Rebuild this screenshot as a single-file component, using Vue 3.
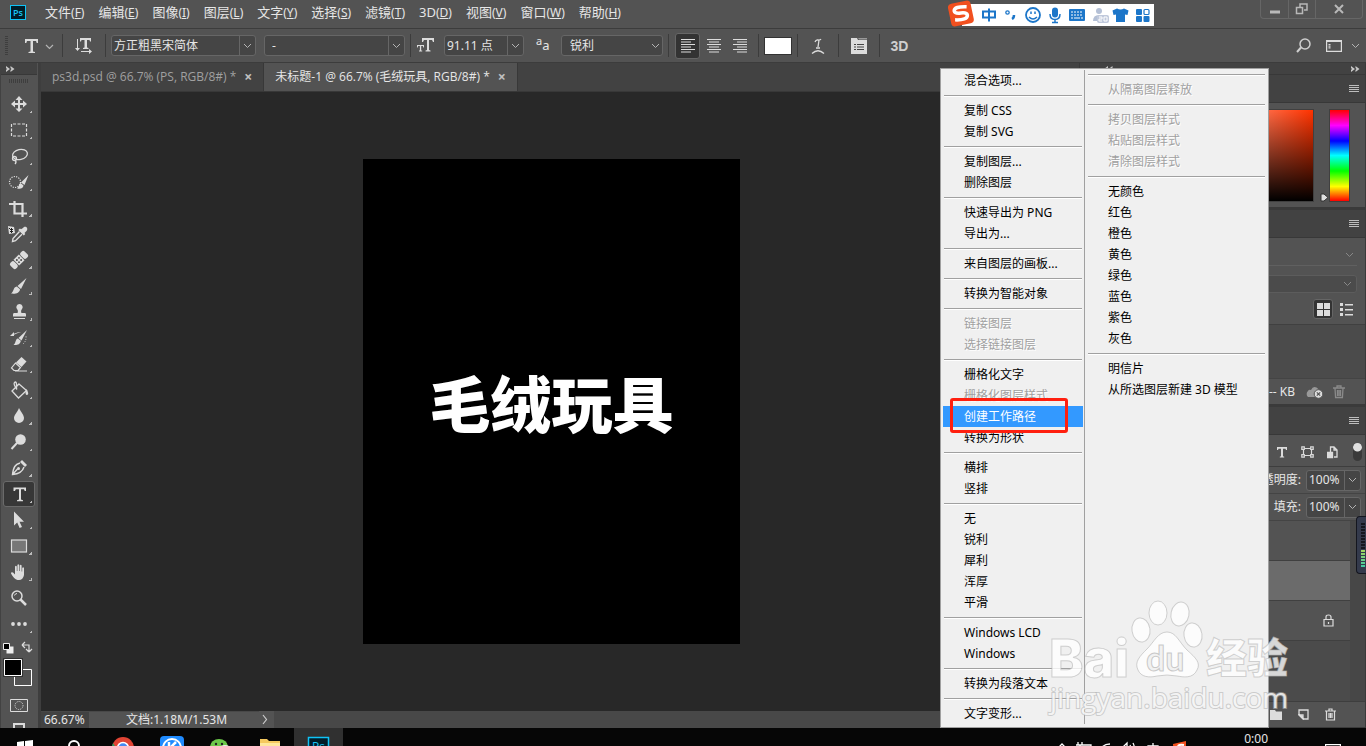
<script setup>
import { ref } from 'vue'

const menus = [
  ['文件', 'F'], ['编辑', 'E'], ['图像', 'I'], ['图层', 'L'], ['文字', 'Y'], ['选择', 'S'],
  ['滤镜', 'T'], ['3D', 'D'], ['视图', 'V'], ['窗口', 'W'], ['帮助', 'H'],
]

const tools = [
  { name: '移动', icon: '<path d="M16 5l3.500 4H17v3h3V9.500l4 3.500-4 3.500V14h-3v3.500h2.500L16 21l-3.500-3.500H15V14h-3v2.500L8 13l4-3.500V12h3V9h-2.500z"/>' },
  { name: '矩形选框', icon: '<path d="M8.500 7v12h15V7z" fill="none" stroke="#dcdcdc" stroke-width="1.200" stroke-dasharray="3 1.500"/>' },
  { name: '套索', icon: '<g fill="none" stroke="#dcdcdc" stroke-width="1.300"><ellipse cx="17" cy="11.500" rx="7.500" ry="5" transform="rotate(-12 17 11.500)"/><circle cx="11.500" cy="15.500" r="2"/><path d="M12 17q2 2 0 4"/></g>' },
  { name: '快速选择', icon: '<circle cx="12" cy="13" r="5.500" fill="none" stroke="#dcdcdc" stroke-width="1.200" stroke-dasharray="1.200 1.200"/><path d="M25.500 6l-4 10-3.500-2.500zM17.500 14l3 2.500c-.5 3.500-3.500 3.500-6.500 3 2-1 1.500-4.500 3.500-5.500z"/>' },
  { name: '裁剪', icon: '<path d="M6 9h13.500v8M11.500 6v12.500H24M19.500 9v13" fill="none" stroke="#dcdcdc" stroke-width="2.200"/>' },
  { name: '吸管', icon: '<path d="M5 5l6 1 1 6-6 1z"/><path d="M6 7h1v1h1V7h1v1h1v1H9v1h1v1H9v1H8v-1H7v-1h1V9H7V8H6z" fill="#222"/><path d="M20 7c2-3 6 0 3.500 3l-2 2 .8 1-1.500 1.500-5.500-5.500L17 7.500l1 .8z"/><path d="M16.500 10.500l-6.500 7-.5 3 3-.8 6.500-6.500" fill="none" stroke="#dcdcdc" stroke-width="1.400"/>' },
  { name: '污点修复', icon: '<g transform="rotate(-45 16 13)"><rect x="6" y="9" width="5.500" height="8" rx="2"/><rect x="12.200" y="9" width="7.600" height="8"/><rect x="20.500" y="9" width="5.500" height="8" rx="2"/><g fill="#444"><circle cx="14.500" cy="11.500" r=".9"/><circle cx="17.500" cy="11.500" r=".9"/><circle cx="14.500" cy="14.500" r=".9"/><circle cx="17.500" cy="14.500" r=".9"/></g></g>' },
  { name: '画笔', icon: '<path d="M23.500 5l-5.500 11-3.500-3zM13.800 13.500l3.200 2.700c-.3 4-4.500 4.800-9 4.300 3-1.500 2-6.500 5.800-7z"/>' },
  { name: '仿制图章', icon: '<path d="M16.500 5a3.200 3.200 0 0 1 2.200 5.500c-.8 1-.7 2.500-.2 3.500H22q1 0 1 1.500V17.500H10v-2q0-1.500 1-1.500h3.500c.5-1 .6-2.500-.2-3.500A3.200 3.200 0 0 1 16.500 5zM11 19h11v1H11z"/>' },
  { name: '历史记录画笔', icon: '<path d="M24 5l-5.500 10.500-3-2.500zM15 13.500l2.800 2.300c-.5 4-3.800 4.500-7.300 4.200 2.500-1.500 1.500-6 4.500-6.500z"/><path d="M7 11l4-4v1.800q4-2 7-1.800-4 1-7 2.800V11z"/><path d="M20 19q3.500-3 3-8" fill="none" stroke="#dcdcdc" stroke-dasharray="1 1.500"/>' },
  { name: '橡皮擦', icon: '<path d="M18.500 6l5 4.500-5 5.500-5.500-4.500z"/><path d="M12.500 12l5 4.500-2.500 3h-4l-2.500-2.500zM12 20h12" fill="none" stroke="#dcdcdc" stroke-width="1.200"/>' },
  { name: '油漆桶', icon: '<path d="M16 7l7.500 6.500-8 7.500-6.500-7zM13.500 12V7q-.5-3-2-1.500T14 12.500" fill="none" stroke="#dcdcdc" stroke-width="1.300"/><path d="M23 12c3 3 2.500 6 1 6s-2-2-1-6z"/>' },
  { name: '模糊', icon: '<path d="M16 5c2.500 5 5 7 5 10a5 5 0 0 1-10 0c0-3 3-5 5-10z"/>' },
  { name: '减淡', icon: '<circle cx="17.500" cy="10.500" r="5.300"/><path d="M14 14l-5.500 6" stroke="#dcdcdc" stroke-width="2"/>' },
  { name: '钢笔', icon: '<path d="M19 5l5 5-2 2-5-5z"/><path d="M17 8c-5 1.500-6.500 4-7.500 11.500 6-.5 10-2.500 11.500-7.500M9.500 19.500l5-5.500" fill="none" stroke="#dcdcdc" stroke-width="1.400"/><circle cx="15.500" cy="13.500" r="1.500"/>' },
  { name: '横排文字', icon: '<path d="M10.500 6.500h12.500V10h-1.300l-.7-1.700h-3V18.500l2 .7v1h-6v-1l2-.7V8.300h-3.200L12 10h-1.500z"/>' },
  { name: '路径选择', icon: '<path d="M11 4.500v14l3.200-3 2.400 5.500 2.400-1-2.500-5.300H21z"/>' },
  { name: '矩形', icon: '<rect x="8.500" y="7" width="15" height="12" fill="#777" stroke="#dcdcdc" stroke-width="1.200"/>' },
  { name: '抓手', icon: '<path d="M12 13V7.500q1-1.500 1.800 0V12h.6V6q1-1.500 1.800 0v6h.6V6.500q1-1.500 1.800 0V12.500h.6V9q1-1.300 1.800 0v7q-1 5-5 5h-1.500q-3.500-1-6.500-6.500 0-2 2-1l2 2z"/>' },
  { name: '缩放', icon: '<circle cx="14" cy="11" r="5" fill="none" stroke="#dcdcdc" stroke-width="1.500"/><path d="M17.500 14.500l5.500 5.500" stroke="#dcdcdc" stroke-width="2.500"/><path d="M11.500 10.500q.5-2 2.500-2" stroke="#dcdcdc" fill="none"/>', flat: true },
  { name: '更多', icon: '<circle cx="10" cy="13" r="1.900"/><circle cx="16" cy="13" r="1.900"/><circle cx="22" cy="13" r="1.900"/>' },
]

const activeTool = ref('横排文字')
const font = ref('方正粗黑宋简体')
const fontStyle = ref('-')
const fontSize = ref('91.11 点')
const opacity = ref('100%')
const fill = ref('100%')

// null = linia podziału, ! = pozycja nieaktywna
const leftMenu = [
  '混合选项...', null, '复制 CSS', '复制 SVG', null, '复制图层...', '删除图层', null,
  '快速导出为 PNG', '导出为...', null, '来自图层的画板...', null, '转换为智能对象', null,
  '!链接图层', '!选择链接图层', null, '栅格化文字', '!栅格化图层样式', '创建工作路径', '转换为形状', null,
  '横排', '竖排', null, '无', '锐利', '犀利', '浑厚', '平滑', null,
  'Windows LCD', 'Windows', null, '转换为段落文本', null, '文字变形...',
]
const rightMenu = [
  null, '!从隔离图层释放', null, '!拷贝图层样式', '!粘贴图层样式', '!清除图层样式', null,
  '无颜色', '红色', '橙色', '黄色', '绿色', '蓝色', '紫色', '灰色', null,
  '明信片', '从所选图层新建 3D 模型',
]
const columns = [leftMenu, rightMenu]
const marked = '创建工作路径'
</script>

<template>
  <div class="app">
    <header class="menubar">
      <svg class="logo" width="16" height="15" viewBox="0 0 16 15">
        <rect x=".5" y=".5" width="15" height="14" fill="#001d29" stroke="#0fc3f7" />
        <text x="3" y="11" font-size="9" font-family="Open Sans" font-weight="600" fill="#18c5f5">Ps</text>
      </svg>
      <nav class="menus">
        <button v-for="m in menus" :key="m[1]">{{ m[0] }}<span class="key">(<u>{{ m[1] }}</u>)</span></button>
      </nav>
      <div class="window-buttons">
        <button aria-label="最小化"><svg width="12" height="12"><path d="M1 7.500h10v3H1z" fill="#b8b8b8" /></svg></button>
        <button aria-label="还原"><svg width="14" height="12" fill="none" stroke="#b8b8b8" stroke-width="1.500"><path d="M5 5V1h7v6H9M1.500 4.500h6v6h-6z" /></svg></button>
        <button class="wide" aria-label="关闭"><svg width="12" height="12" stroke="#b8b8b8" stroke-width="2"><path d="M2 2l8 8M10 2l-8 8" /></svg></button>
      </div>
    </header>

    <div class="options">
      <i class="grip"></i>
      <button class="preset" aria-label="工具预设">
        <svg width="30" height="16"><path d="M1 1h13v4h-1.300L12 3H9v10.500l2 .5v1H4.500v-1l2-.5V3H3l-.7 2H1z" fill="#dcdcdc" /><path d="M22 7l3.500 3.500L29 7" fill="none" stroke="#b4b4b4" stroke-width="1.200" /></svg>
      </button>
      <i class="sep"></i>
      <button class="orient" aria-label="切换文本方向">
        <svg width="18" height="16" fill="#dcdcdc"><path d="M5 0h11v3.500h-1L14.500 2H12v7.500l1.500.5v1H8v-1l1.500-.5V2h-3L6 3.500H5zM2 1v9H0l2.500 3L5 10H3V1zM6 13h8v-2l3 2.500-3 2.500v-2H6z" /></svg>
      </button>
      <i class="sep"></i>
      <div class="combo family">
        <input v-model="font" aria-label="字体"><button aria-label="字体列表"><svg width="9" height="6"><path d="M1 1l3.500 3.500L8 1" /></svg></button>
      </div>
      <div class="combo style">
        <input v-model="fontStyle" aria-label="字体样式"><button aria-label="样式列表"><svg width="9" height="6"><path d="M1 1l3.500 3.500L8 1" /></svg></button>
      </div>
      <i class="sep"></i>
      <svg class="size-icon" width="18" height="15" fill="#dcdcdc"><path d="M5 0h12v4h-1l-1-2h-3v10l1.500.5v1h-5v-1L10 12V2H7L6 4H5zM0 7h7v2.500h-.7L5.800 8H4.200v4.500h1v1H2v-1h.9V8H1.200L.7 9.500H0z" /></svg>
      <div class="combo size">
        <input v-model="fontSize" aria-label="字号"><button aria-label="字号列表"><svg width="9" height="6"><path d="M1 1l3.500 3.500L8 1" /></svg></button>
      </div>
      <label class="aa" for="aa"><sup>a</sup>a</label>
      <div class="select">
        <select id="aa"><option>锐利</option><option>犀利</option><option>浑厚</option><option>平滑</option></select>
        <svg width="9" height="6"><path d="M1 1l3.500 3.500L8 1" /></svg>
      </div>
      <i class="sep"></i>
      <div class="aligns">
        <button class="on" aria-label="左对齐"><svg width="14" height="14"><path d="M0 .5h14M0 3h10M0 5.500h14M0 8h10M0 10.500h14M0 13h10" /></svg></button>
        <button aria-label="居中"><svg width="14" height="14"><path d="M0 .5h14M2 3h10M0 5.500h14M2 8h10M0 10.500h14M2 13h10" /></svg></button>
        <button aria-label="右对齐"><svg width="14" height="14"><path d="M0 .5h14M4 3h10M0 5.500h14M4 8h10M0 10.500h14M4 13h10" /></svg></button>
      </div>
      <i class="sep"></i>
      <button class="swatch" aria-label="文本颜色"></button>
      <i class="sep"></i>
      <button class="square" aria-label="变形"><svg width="14" height="16" fill="none" stroke="#dcdcdc" stroke-width="1.300"><path d="M4 4q1-2.500 3-2t3-1M8 2l-1 7M5 10h4M1 15.500q6-5.500 12 0" /></svg></button>
      <i class="sep"></i>
      <button class="square" aria-label="字符面板"><svg width="16" height="16"><path d="M0 0h6l1 2h9v14H0z" fill="#dcdcdc" /><path d="M7 0h9v1.500H8z" fill="#999" /><path d="M3 6.500h2M6 6.500h7M3 9h2M6 9h7M3 11.500h2M6 11.500h7" stroke="#444" /></svg></button>
      <i class="sep"></i>
      <button class="threed">3D</button>
      <div class="options-end">
        <svg width="16" height="15" fill="none" stroke="#cfcfcf" stroke-width="1.500"><circle cx="9" cy="6" r="5" /><path d="M5 9.500L1 14" stroke-width="2" /></svg>
        <svg width="16" height="12" fill="none" stroke="#dcdcdc" stroke-width="1.200"><path d="M.6.600h14.800v10.800H.6zM1 1.500h14" /><path d="M3.500 4v5" stroke-dasharray="1.500 .8" stroke-width="2" /></svg>
        <svg width="9" height="6" fill="none" stroke="#b4b4b4"><path d="M1 1l3.500 3.500L8 1" /></svg>
      </div>
    </div>

    <main class="workspace">
      <aside class="toolbox">
        <div class="strip"><svg width="9" height="6" fill="#c8c8c8"><path d="M0 0l4 3-4 3V4l1-1-1-1zM4.500 0l4 3-4 3V4l1-1-1-1z" /></svg></div>
        <i class="dots"></i>
        <button v-for="t in tools" :key="t.name" class="tool" :class="{ on: t.name === activeTool }" :aria-label="t.name" @click="activeTool = t.name">
          <svg width="32" height="26" fill="#dcdcdc" v-html="t.icon"></svg>
          <i v-if="!t.flat" class="more"></i>
        </button>
        <svg class="colors" width="34" height="50">
          <path d="M4.500 8.500h7v7h-7z" fill="#eee" /><path d="M1.500 5.500h6v6h-6z" fill="#000" stroke="#eee" />
          <path d="M20 7h7v6M20 7l3-3M20 7l3 3M27 14l-3-3M27 14l3-3" fill="none" stroke="#dcdcdc" stroke-width="1.200" />
          <path d="M12.500 31.500h17v16h-17z" fill="#535353" stroke="#fff" />
          <path d="M1 20h20v19H1z" fill="#333" /><path d="M2.500 21.500h17v16h-17z" fill="#000" stroke="#fff" />
        </svg>
        <button class="mask" aria-label="快速蒙版"><svg width="18" height="13" fill="none" stroke="#dcdcdc"><path d="M.5.500h17v12H.5z" /><circle cx="9" cy="6.500" r="4" stroke-dasharray="1 1" /></svg></button>
        <button class="mask" aria-label="屏幕模式"><svg width="12" height="12" fill="none" stroke="#dcdcdc" stroke-width="2"><path d="M1 1h10v10H1z" /></svg></button>
      </aside>

      <section class="document">
        <div class="tabs">
          <div class="tab">ps3d.psd @ 66.7% (PS, RGB/8#) *<button aria-label="关闭标签">×</button></div>
          <div class="tab active">未标题-1 @ 66.7% (毛绒玩具, RGB/8#) *<button aria-label="关闭标签">×</button></div>
        </div>
        <div class="stage">
          <div class="view"><div class="artboard">毛绒玩具</div></div>
          <div class="scroll"></div>
        </div>
        <div class="status">
          <span class="zoom">66.67%</span>
          <span class="info">文档:1.18M/1.53M</span>
          <button aria-label="更多信息"><svg width="6" height="11" fill="none" stroke="#ccc" stroke-width="1.200"><path d="M1 1l3.500 4.500L1 10" /></svg></button>
        </div>
      </section>

      <aside class="dock">
        <div class="strip">
          <svg width="9" height="6" fill="#c8c8c8"><path d="M4 0L0 3l4 3V4L3 3l1-1zM8.500 0l-4 3 4 3V4l-1-1 1-1z" /></svg>
          <svg width="9" height="6" fill="#c8c8c8"><path d="M0 0l4 3-4 3V4l1-1-1-1zM4.500 0l4 3-4 3V4l1-1-1-1z" /></svg>
        </div>
        <section class="panel">
          <div class="head"><i class="burger"></i></div>
          <div class="picker">
            <div class="spectrum"></div>
            <svg width="9" height="9"><path d="M1 1h3l4 3.500L4 8H1z" fill="#e0e0e0" stroke="#333" /></svg>
            <div class="hue"></div>
          </div>
        </section>
        <section class="panel">
          <div class="head"><i class="burger"></i></div>
          <div class="lib-top"><svg width="9" height="6"><path d="M1 1l3.500 3.500L8 1" /></svg></div>
          <div class="lib-search"><svg width="9" height="6"><path d="M1 1l3.500 3.500L8 1" /></svg></div>
          <div class="lib-views">
            <button class="on" aria-label="网格视图"><svg width="13" height="13" fill="#dcdcdc"><path d="M0 0h6v6H0zM7 0h6v6H7zM0 7h6v6H0zM7 7h6v6H7z" /></svg></button>
            <button aria-label="列表视图"><svg width="13" height="13" fill="#dcdcdc"><path d="M0 0h3v3H0zM5 1h8v1.500H5zM0 5h3v3H0zM5 6h8v1.500H5zM0 10h3v3H0zM5 11h8v1.500H5z" /></svg></button>
          </div>
          <div class="lib-body"></div>
          <div class="lib-foot">
            <span>-- KB</span>
            <svg width="20" height="15"><path d="M4 13a4 4 0 0 1 0-6q1-2 3-1 2-4.500 5.500-2.500 3 1.500 2 5V13z" fill="#999" /><circle cx="14.500" cy="10" r="4.300" fill="#ddd" stroke="#555" /><path d="M12.800 8.300l3.400 3.400M16.200 8.300l-3.400 3.400" stroke="#555" stroke-width="1.200" /></svg>
            <svg width="12" height="14" fill="none" stroke="#8a8a8a" stroke-width="1.300"><path d="M0 3h12M4 2.500V1h4v1.500M2 3.500l.6 9h6.800l.6-9M4.500 5v6M6 5v6M7.500 5v6" /></svg>
          </div>
        </section>
        <section class="panel layers">
          <div class="head"><i class="burger"></i></div>
          <div class="filters">
            <svg width="12" height="12" fill="#dcdcdc"><path d="M1 1h10v3h-1l-.5-1.300H7v7.600l1.200.4v.8H3.800v-.8l1.200-.4V2.700H2.500L2 4H1z" /></svg>
            <svg width="13" height="12" fill="none" stroke="#dcdcdc" stroke-width="1.200"><path d="M2.500 2.500h8v7h-8z" /><path d="M.8.800h2.500v2.500H.8zM9.700.800h2.500v2.500H9.700zM.8 8.700h2.500v2.500H.8zM9.700 8.700h2.500v2.500H9.700z" fill="#535353" /></svg>
            <svg width="11" height="13" fill="none" stroke="#dcdcdc" stroke-width="1.300"><path d="M3.500 6V1H7l3 3v7H7M7 1v3h3" /><path d="M.5 6.500h5v5h-5z" fill="#dcdcdc" /></svg>
            <i class="toggle"></i>
          </div>
          <div class="amount">
            <label for="opacity">不透明度:</label>
            <div class="combo"><input id="opacity" v-model="opacity"><button aria-label="不透明度"><svg width="9" height="6"><path d="M1 1l3.500 3.500L8 1" /></svg></button></div>
          </div>
          <div class="amount">
            <label for="fill">填充:</label>
            <div class="combo"><input id="fill" v-model="fill"><button aria-label="填充"><svg width="9" height="6"><path d="M1 1l3.500 3.500L8 1" /></svg></button></div>
          </div>
          <div class="layer-list">
            <div class="layer"></div>
            <div class="layer on"></div>
            <div class="layer">
              <svg width="11" height="13" fill="none" stroke="#dcdcdc" stroke-width="1.200"><path d="M1 5.500h9v6.500H1zM3 5.500V3q0-2 2.500-2T8 3v2.500M5.500 8v2" /></svg>
            </div>
          </div>
          <div class="layer-foot">
            <svg width="12" height="10" fill="#dcdcdc"><path d="M0 0h5l1 1.500h6V10H0z" /></svg>
            <svg width="11" height="11" fill="none" stroke="#dcdcdc" stroke-width="1.300"><path d="M1 5V1h9v9H6zM1 6h4v4z" /></svg>
            <svg width="11" height="13" fill="none" stroke="#dcdcdc" stroke-width="1.200"><path d="M0 3h11M4 2.500V1h3v1.500M1.500 3.500v8.500h8V3.500M4 5v5M5.500 5v5M7 5v5" /></svg>
          </div>
        </section>
      </aside>
    </main>

    <footer class="taskbar">
      <div class="apps">
        <button aria-label="开始"><svg width="24" height="24" fill="#fff"><path d="M4 6l7-1v7H4zM12 5l8-1v8h-8zM4 13h7v7l-7-1zM12 13h8v8l-8-1z" /></svg></button>
        <button aria-label="搜索"><svg width="24" height="24" fill="none" stroke="#fff" stroke-width="2"><circle cx="12" cy="10" r="5" /></svg></button>
        <button aria-label="Chrome"><svg width="24" height="24"><circle cx="12" cy="12" r="11" fill="#e14434" /><path d="M2 7l6 10v6Q-2 18 2 7z" fill="#1fa463" /><circle cx="12" cy="12" r="5.500" fill="#4688f1" stroke="#fff" stroke-width="1.500" /></svg></button>
        <button aria-label="K"><svg width="24" height="24"><rect width="24" height="24" rx="4" fill="#1f8bff" /><circle cx="12" cy="12" r="9" fill="none" stroke="#fff" stroke-width="2" /><path d="M9 6v11M16 6l-6 6 6 5" stroke="#fff" stroke-width="2.500" fill="none" /></svg></button>
        <button aria-label="微信"><svg width="24" height="24"><ellipse cx="10" cy="11" rx="9" ry="8" fill="#6cc94a" /><ellipse cx="16" cy="15" rx="7" ry="6" fill="#eee" /><circle cx="7" cy="8" r="1.200" fill="#222" /><circle cx="13" cy="8" r="1.200" fill="#222" /></svg></button>
        <button aria-label="资源管理器"><svg width="24" height="24"><path d="M2 3h7l2 2h11v16H2z" fill="#f5c95f" /><path d="M2 7h20v14H2z" fill="#ffe79c" /></svg></button>
        <button class="open" aria-label="Photoshop"><svg width="24" height="24"><rect x="1.500" y="1.500" width="20" height="20" fill="#001d29" stroke="#0fc3f7" stroke-width="1.500" /><text x="5" y="15" font-size="12" font-family="Open Sans" fill="#18c5f5">Ps</text></svg></button>
      </div>
      <div class="tray">
        <svg width="132" height="24" fill="none" stroke="#fff" stroke-width="1.300"><path d="M2 12l4-4 4 4M20 9h15v8H24V9M22 6v3M26 6v3M44 14q3-6 10-6M48 16q2-4 6-4M64 11h3l4-4v12l-4-4h-3zM74 9q2 4 0 8M77 7q3 6 0 12M92 10h10v5H92zM97 7v12" /><path d="M117 8l13-3v19h-12z" fill="#f4511e" stroke="none" /><path d="M128 9q-6-1-6 2t6 3" stroke-width="2" /></svg>
        <div class="clock"><span>0:00</span></div>
        <svg width="16" height="16" fill="none" stroke="#fff" stroke-width="1.200"><path d="M.6.600h14.800v10H10L6 14v-3.400H.6z" /></svg>
      </div>
    </footer>

    <!-- pasek IME -->
    <div class="ime">
      <svg width="206" height="28">
        <path d="M14 4h192v22H14z" fill="#fff" />
        <g transform="rotate(-12 13 14)"><rect x="1.500" y="2" width="23" height="23" rx="4" fill="#f1501f" /><path d="M20 8q-12-3-13 1.500 0 3 6 3.500t6 3.500q-1 5-13 2" fill="none" stroke="#fff" stroke-width="3.500" /></g>
        <g fill="none" stroke="#1c76c9" stroke-width="2">
          <path d="M35 11.500h12v6H35zM41 8.500v13" />
          <circle cx="59.500" cy="12.500" r="1.700" stroke-width="1.300" /><path d="M66 15q0 3-2 4" stroke-width="2.500" />
          <circle cx="85" cy="15" r="7" stroke-width="1.800" /><path d="M81 17q4 4 8 0M83 11.500v2.500M87 11.500v2.500" stroke-width="1.500" />
          <path d="M102 14q0 5.500 5 5.500t5-5.500M107 19v4M104 22.500h6" stroke-width="1.500" />
        </g>
        <rect x="104" y="7.500" width="6" height="10" rx="3" fill="#1c76c9" />
        <rect x="121" y="9" width="16" height="12" rx="1" fill="#1c76c9" /><path d="M123 12h12M123 15h12" stroke="#fff" stroke-dasharray="2 1" /><path d="M123 18h12" stroke="#fff" stroke-dasharray="2 1 6 1" />
        <circle cx="151" cy="11" r="3" fill="#b4c0d6" /><path d="M145 21q0-6 6-6h5v6z" fill="#b4c0d6" />
        <rect x="149" y="15" width="12" height="8" rx="2" fill="#c0c9dc" /><path d="M151 17h3v2h-3v2h3M156 17h3v4h-3z" fill="none" stroke="#fff" />
        <path d="M169 8.500q3.500 2 7 0l4.500 2-1 4.500-2.500-.5V22h-9v-7.500l-2.500.5-1-4.500z" fill="#1c76c9" />
        <g fill="#1c76c9"><rect x="188" y="9" width="6" height="6" rx="1" /><rect x="188" y="16" width="6" height="6" rx="1" /><rect x="195.500" y="16" width="6" height="6" rx="1" /></g><rect x="196" y="9.500" width="5" height="5" rx="1" fill="none" stroke="#1c76c9" stroke-width="1.200" />
      </svg>
    </div>

    <div class="popup" role="menu">
      <div v-for="(col, c) in columns" :key="c" class="col">
        <template v-for="(item, i) in col" :key="i">
          <hr v-if="item === null">
          <button v-else role="menuitem" :class="{ hot: item === marked }" :disabled="item[0] === '!'">
            {{ item.replace('!', '') }}<i v-if="item === marked" class="frame"></i>
          </button>
        </template>
      </div>
    </div>

    <div class="gauge"><i></i></div>

    <svg class="watermark" width="250" height="126">
      <g fill="#fff" fill-opacity=".8" stroke="#b4b4b4" stroke-opacity=".6">
        <text x="4" y="81" font-family="Inter, Liberation Sans, sans-serif" font-weight="800" font-size="52">Bai</text>
        <ellipse cx="96" cy="34" rx="9" ry="12" transform="rotate(-8 96 34)" />
        <ellipse cx="113" cy="17" rx="9" ry="12" />
        <ellipse cx="135" cy="18" rx="9" ry="12" transform="rotate(12 135 18)" />
        <ellipse cx="148" cy="39" rx="9" ry="12" transform="rotate(-8 148 39)" />
        <path d="M122 36c9 0 12 10 20 18 9 8 14 13 10 20-4 9-14 7-20 6q-10-2-20 0c-8 2-16 1-19-6-4-8 2-14 9-21 7-7 11-17 20-17z" />
        <text x="101" y="75" font-family="Lato, sans-serif" font-weight="700" font-size="34" stroke="#aaa" fill="#eee">du</text>
        <text x="161" y="77" font-family="Noto Sans CJK SC, sans-serif" font-weight="900" font-size="41">经验</text>
        <text x="5" y="112" font-family="Open Sans, sans-serif" font-size="28" font-weight="500" paint-order="stroke" stroke-width="2">jingyan.baidu.com</text>
      </g>
    </svg>
  </div>
</template>

<style>
body {
  background: #000;
}
</style>

<style scoped>
.app {
  position: relative;
  display: flex;
  flex-direction: column;
  height: 100vh;
  min-height: 740px;
  overflow: hidden;
  background: #535353;
  color: #e6e6e6;
  font: 12px/16px "Noto Sans", "Noto Sans CJK SC", sans-serif;
}
* {
  box-sizing: border-box;
}
button, input, select {
  margin: 0;
  padding: 0;
  border: 0;
  background: none;
  color: inherit;
  font: inherit;
  outline: none;
}
svg {
  display: block;
  flex: none;
}

/* menu */
.menubar {
  display: flex;
  align-items: center;
  height: 29px;
  flex: none;
  padding-left: 10px;
  border-bottom: 1px solid #3c3c3c;
}
.menus {
  display: flex;
  margin-left: 12px;
  flex: 1;
  font-size: 13px;
  line-height: 20px;
}
.menus button {
  padding: 0 7px 4px;
}
.menubar .logo {
  margin-bottom: 4px;
}
.key {
  font-size: 12px;
}
.window-buttons {
  display: flex;
  align-self: flex-start;
  margin-right: 3px;
  border: 1px solid #666;
  border-top: 0;
  border-radius: 0 0 4px 4px;
}
.window-buttons button {
  display: grid;
  place-items: center;
  width: 27px;
  height: 18px;
}
.window-buttons button + button {
  border-left: 1px solid #666;
}
.window-buttons .wide {
  width: 47px;
}

/* opcje narzędzia */
.options {
  display: flex;
  align-items: center;
  flex: none;
  height: 34px;
  padding-left: 5px;
  border-bottom: 1px solid #3c3c3c;
}
.grip {
  width: 3px;
  height: 20px;
  background: repeating-linear-gradient(#3e3e3e 0 1px, #535353 1px 2px);
}
.preset {
  padding: 0 8px 0 16px;
}
.sep {
  width: 1px;
  height: 23px;
  background: #3c3c3c;
}
.orient {
  padding: 0 12px;
}
.combo {
  display: flex;
  height: 21px;
  border: 1px solid #666;
  border-radius: 3px;
  background: #454545;
}
.combo input {
  flex: 1;
  min-width: 0;
  padding: 0 2px;
}
.combo button {
  display: grid;
  place-items: center;
  width: 16px;
  border-left: 1px solid #666;
}
.combo path, .select path {
  fill: none;
  stroke: #b4b4b4;
}
.family {
  width: 145px;
  margin-left: 5px;
}
.style {
  width: 141px;
  margin: 0 5px 0 8px;
}
.style input {
  padding-left: 7px;
}
.size-icon {
  margin: 0 9px 0 6px;
}
.size {
  width: 80px;
}
.aa {
  width: 37px;
  padding-left: 12px;
  font-size: 13px;
}
.aa sup {
  font-size: 11px;
  line-height: 8px;
}
.select {
  display: grid;
  align-items: center;
  width: 102px;
  height: 21px;
  margin-right: 5px;
  border: 1px solid #666;
  border-radius: 3px;
  background: #454545;
}
.select select, .select svg {
  grid-area: 1 / 1;
}
.select select {
  appearance: none;
  padding-left: 8px;
}
.select svg {
  justify-self: end;
  margin-right: 2px;
  pointer-events: none;
}
.aligns {
  display: flex;
  gap: 1px;
  padding: 0 6px;
}
.aligns button {
  display: grid;
  place-items: center;
  width: 25px;
  height: 26px;
  border-radius: 3px;
}
.aligns .on, .lib-views .on {
  background: #333;
  border: 1px solid #666;
}
.aligns path {
  stroke: #dcdcdc;
}
.swatch {
  width: 28px;
  height: 18px;
  margin: 0 5px;
  border: 1px solid #333;
  background: #fff;
}
.square {
  display: grid;
  place-items: center;
  width: 40px;
}
.threed {
  width: 39px;
  font: 700 14px/18px "Liberation Sans", sans-serif;
  color: #cfcfcf;
}
.options-end {
  display: flex;
  align-items: center;
  gap: 14px;
  margin-left: auto;
  padding-right: 6px;
}
.options-end svg:last-child {
  margin-left: -5px;
}

/* obszar roboczy */
.workspace {
  display: grid;
  grid-template-columns: 41px minmax(0, 1fr) 287px;
  flex: 1;
  min-height: 0;
  overflow: hidden;
}
.toolbox {
  display: flex;
  flex-direction: column;
  align-items: center;
  height: 100%;
  overflow: hidden;
  padding-right: 1px;
  border-left: 1px solid #424242;
  border-right: 3px solid #3e3e3e;
}
.strip {
  display: flex;
  align-items: center;
  flex: none;
  width: 100%;
  height: 12px;
  padding-left: 5px;
  background: #424242;
  border-bottom: 1px solid #383838;
}
.dots {
  width: 20px;
  height: 4px;
  flex: none;
  margin: 4px 0 8px;
  background: repeating-linear-gradient(90deg, #3e3e3e 0 1px, #535353 1px 2px);
}
.tool {
  display: flex;
  align-items: flex-end;
  flex: none;
  width: 32px;
  height: 26px;
  border-radius: 3px;
}
.tool.on {
  background: #373737;
  box-shadow: inset 0 0 0 1px #6a6a6a;
}
.more {
  width: 3px;
  height: 3px;
  margin: 0 0 4px -6px;
  background: linear-gradient(135deg, transparent 50%, #bbb 50%);
}
.colors {
  margin-top: 1px;
}
.mask {
  flex: none;
  margin-top: 11px;
}

.document {
  display: flex;
  flex-direction: column;
  min-width: 0;
}
.tabs {
  display: flex;
  flex: none;
  height: 29px;
  background: #424242;
  border-bottom: 1px solid #383838;
  font-family: "Open Sans", "Noto Sans CJK SC", sans-serif;
}
.tab {
  display: flex;
  align-items: center;
  gap: 8px;
  padding: 0 11px;
  border-right: 1px solid #383838;
  color: #a0a0a0;
  white-space: nowrap;
}
.tab.active {
  background: #535353;
  color: #e6e6e6;
}
.tab button {
  color: #c0c0c0;
  font: 700 14px/14px "Noto Sans", sans-serif;
}
.stage {
  display: flex;
  flex: 1;
  min-height: 0;
  background: #282828;
}
.view {
  display: grid;
  place-items: center;
  flex: 1;
}
.artboard {
  display: grid;
  place-items: center;
  width: 377px;
  height: 485px;
  background: #000;
  color: #fff;
  font: 900 61px/80px "Noto Sans CJK SC", sans-serif;
}
.scroll {
  width: 17px;
  background: #4a4a4a;
}
.status {
  display: flex;
  align-items: center;
  flex: none;
  height: 17px;
  background: #484848;
}
.status .zoom {
  width: 48px;
  padding-left: 3px;
  background: #424242;
}
.status .info {
  width: 170px;
  padding-left: 37px;
  background: #535353;
}
.status button {
  padding: 3px 6px 3px 3px;
  background: #535353;
}

/* panele */
.dock {
  display: flex;
  flex-direction: column;
  min-width: 0;
  border-left: 1px solid #383838;
  border-right: 1px solid #3a3a3a;
}
.dock .strip {
  justify-content: space-between;
  padding: 0 5px 0 24px;
}
.head {
  display: flex;
  align-items: center;
  justify-content: flex-end;
  flex: none;
  height: 28px;
  padding-right: 6px;
  background: #424242;
  border-bottom: 1px solid #383838;
}
.burger {
  width: 10px;
  height: 7px;
  background: repeating-linear-gradient(#bdbdbd 0 1px, transparent 1px 2px);
}
.panel {
  border-bottom: 3px solid #3a3a3a;
}
.panel.layers {
  display: flex;
  flex-direction: column;
  flex: 1;
  min-height: 0;
  border-bottom: 1px solid #3a3a3a;
}
.picker {
  display: flex;
  align-items: flex-end;
  height: 104px;
  padding: 6px 15px 5px 60px;
}
.spectrum {
  flex: 1;
  height: 93px;
  border: 1px solid #404040;
  background: linear-gradient(transparent, #000), linear-gradient(90deg, #fff, #ff3300);
}
.picker svg {
  margin-left: 6px;
}
.hue {
  width: 21px;
  height: 93px;
  border: 1px solid #404040;
  background: linear-gradient(red, #f0f 17%, #00f 34%, #0ff 50%, #0f0 67%, #ff0 84%, red);
}
.lib-top, .lib-search {
  display: flex;
  align-items: center;
  justify-content: flex-end;
}
.lib-top {
  height: 28px;
  margin: 0 8px;
  padding: 6px 3px 0 0;
  border-bottom: 1px solid #606060;
}
.lib-top path, .lib-search path {
  fill: none;
  stroke: #888;
}
.lib-search {
  height: 18px;
  margin: 9px 8px 0;
  padding-right: 4px;
  border: 1px solid #5c5c5c;
  border-radius: 3px;
  background: #4b4b4b;
}
.lib-views {
  display: flex;
  justify-content: flex-end;
  gap: 3px;
  height: 32px;
  padding: 6px 9px 0;
  border-bottom: 1px solid #404040;
}
.lib-views button {
  display: grid;
  place-items: center;
  width: 20px;
  height: 20px;
  border-radius: 3px;
}
.lib-body {
  height: 54px;
  background: #4b4b4b;
  border-bottom: 1px solid #444;
}
.lib-foot {
  display: flex;
  align-items: center;
  justify-content: flex-end;
  gap: 9px;
  height: 25px;
  padding-right: 20px;
}
.filters {
  display: flex;
  align-items: center;
  justify-content: flex-end;
  gap: 13px;
  flex: none;
  height: 32px;
  padding: 3px 3px 0 0;
  border-bottom: 1px solid #3e3e3e;
}
.toggle {
  width: 9px;
  height: 18px;
  margin-left: 2px;
  border-radius: 5px;
  background: radial-gradient(circle at 50% 4px, #e0e0e0 4px, #3a3a3a 5px);
}
.amount {
  display: flex;
  align-items: center;
  justify-content: flex-end;
  gap: 5px;
  flex: none;
  height: 27px;
  padding-right: 4px;
  border-bottom: 1px solid #444;
}
.amount .combo {
  width: 55px;
}
.layer-list {
  flex: 1;
  min-height: 0;
  background: #4b4b4b;
  border-right: 15px solid #474747;
}
.layer {
  display: flex;
  align-items: center;
  justify-content: flex-end;
  height: 40px;
  padding-right: 16px;
  background: #535353;
  border-bottom: 1px solid #404040;
}
.layer.on {
  background: #6b6b6b;
}
.layer-foot {
  display: flex;
  align-items: center;
  justify-content: flex-end;
  gap: 16px;
  flex: none;
  height: 26px;
  padding-right: 29px;
  border-top: 1px solid #3e3e3e;
}

/* pasek zadań, wystaje poza dolną krawędź */
.taskbar {
  display: flex;
  align-items: flex-start;
  justify-content: space-between;
  flex: none;
  height: 18px;
  overflow: hidden;
  background: #060606;
}
.apps {
  display: flex;
}
.apps button {
  display: grid;
  place-items: center;
  width: 49px;
  height: 40px;
}
.apps .open {
  background: #303030;
}
.tray {
  display: flex;
  align-items: center;
  height: 40px;
  padding-right: 25px;
}
.tray > svg:last-child {
  margin-top: 8px;
}
.clock {
  height: 38px;
  padding: 2px 57px 0 56px;
}

/* nakładki */
.ime {
  position: absolute;
  top: 0;
  right: 212px;
}
.popup {
  position: absolute;
  top: 68px;
  right: 97px;
  display: flex;
  padding: 1px 2px 3px;
  border: 1px solid #a0a0a0;
  background: #f0f0f0;
  color: #000;
}
.col {
  width: 140px;
}
.col + .col {
  width: 182px;
  margin-left: 1px;
  border-left: 1px solid #a0a0a0;
}
.col button {
  position: relative;
  display: block;
  width: 100%;
  height: 21px;
  padding-left: 21px;
  text-align: left;
  line-height: 21px;
  white-space: nowrap;
}
.col + .col button {
  padding-left: 23px;
}
.col button:disabled {
  color: #a0a0a0;
  text-shadow: 1px 1px #fff;
}
.col .hot {
  background: #3399ff;
  color: #fff;
}
.col hr {
  height: 2px;
  margin: 4px 1px 3px;
  border: 0;
  border-top: 1px solid #a0a0a0;
  border-bottom: 1px solid #fff;
}
.col + .col hr {
  margin-left: 3px;
}
.frame {
  position: absolute;
  z-index: 1;
  left: 7px;
  top: -8px;
  width: 118px;
  height: 35px;
  border: 3px solid #ff1f0f;
  border-radius: 3px;
}
.gauge {
  position: absolute;
  top: 516px;
  right: 0;
  width: 10px;
  height: 58px;
  padding: 6px 1px 5px 4px;
  border: 1px solid #14161f;
  border-right: 0;
  border-radius: 4px 0 0 4px;
  background: #343a4c;
}
.gauge i {
  display: block;
  height: 100%;
  background: repeating-linear-gradient(transparent 0 2px, #343a4c 2px 3px), linear-gradient(#15171f 60%, #a4d65e 60%, #3cc8a8);
}
.watermark {
  position: absolute;
  right: 71px;
  bottom: 24px;
  pointer-events: none;
}
</style>
